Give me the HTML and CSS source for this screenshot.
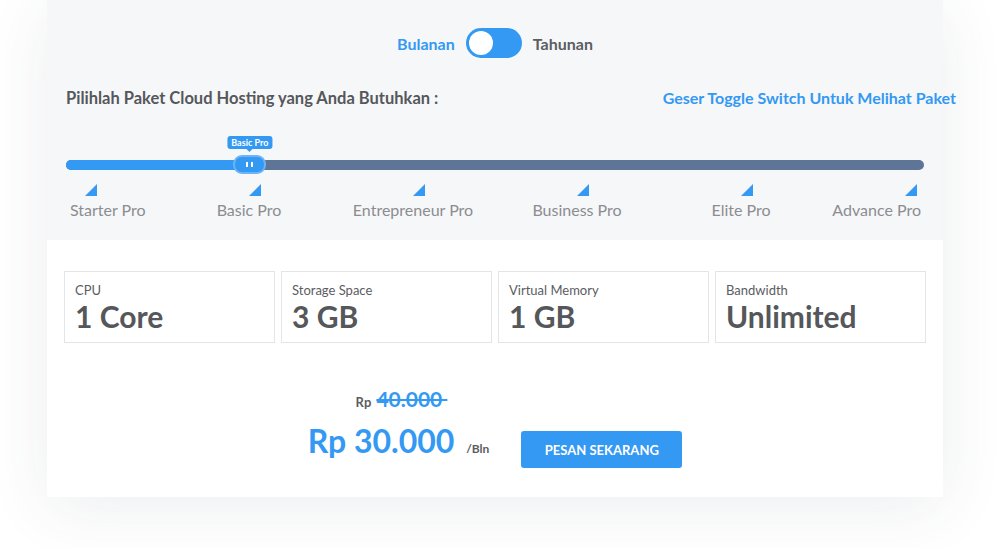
FILE: index.html
```html
<!DOCTYPE html>
<html lang="id">
<head>
    <meta charset="UTF-8">
    <meta name="viewport" content="width=device-width, initial-scale=1.0">
    <title>Paket Cloud Hosting</title>
    <link rel="stylesheet" href="styles.css">
</head>
<body>
    <div class="card">
        <div class="card-top">
            <div class="period-toggle">
                <span class="period active">Bulanan</span>
                <span class="switch"><span class="knob"></span></span>
                <span class="period">Tahunan</span>
            </div>

            <div class="headline">
                <h2>Pilihlah Paket Cloud Hosting yang Anda Butuhkan :</h2>
                <span class="hint">Geser Toggle Switch Untuk Melihat Paket</span>
            </div>

            <div class="slider">
                <div class="track">
                    <div class="fill" style="width: 21.5%"></div>
                </div>
                <div class="handle" style="left: 19.5%">
                    <span class="tip">Basic Pro</span>
                    <span class="grip"></span>
                    <span class="grip"></span>
                </div>
            </div>

            <div class="grid ticks">
                <span class="tick first"></span>
                <span class="tick"></span>
                <span class="tick"></span>
                <span class="tick"></span>
                <span class="tick"></span>
                <span class="tick"></span>
            </div>
            <div class="grid labels">
                <span class="first">Starter Pro</span>
                <span>Basic Pro</span>
                <span>Entrepreneur Pro</span>
                <span>Business Pro</span>
                <span>Elite Pro</span>
                <span class="last">Advance Pro</span>
            </div>
        </div>

        <div class="card-bottom">
            <div class="specs">
                <div class="spec">
                    <div class="spec-name">CPU</div>
                    <div class="spec-value">1 Core</div>
                </div>
                <div class="spec">
                    <div class="spec-name">Storage Space</div>
                    <div class="spec-value">3 GB</div>
                </div>
                <div class="spec">
                    <div class="spec-name">Virtual Memory</div>
                    <div class="spec-value">1 GB</div>
                </div>
                <div class="spec">
                    <div class="spec-name">Bandwidth</div>
                    <div class="spec-value">Unlimited</div>
                </div>
            </div>

            <div class="order">
                <div class="price">
                    <div class="old-price"><small>Rp</small> <s>40.000&nbsp;</s></div>
                    <div class="new-price">Rp 30.000 <small>/Bln</small></div>
                </div>
                <button class="order-btn">PESAN SEKARANG</button>
            </div>
        </div>
    </div>
</body>
</html>
```

FILE: styles.css
```css
* {
    margin: 0;
    padding: 0;
    box-sizing: border-box;
    font-family: Lato, "Open Sans", sans-serif;
}

body {
    background-color: #fff;
    height: 548px;
    overflow: hidden;
}

.card {
    width: 896px;
    margin-left: 47px;
    box-shadow: 0 10px 60px rgba(60, 70, 90, 0.09);
}

.card-top {
    background-color: #f6f7f9;
    padding: 28px 19px 0;
    height: 240px;
}

.period-toggle {
    display: flex;
    justify-content: center;
    align-items: center;
    gap: 11px;
}

.period {
    font-size: 16px;
    font-weight: bold;
    color: #5b5d61;
}

.period.active {
    color: #3399f3;
}

.switch {
    display: flex;
    align-items: center;
    width: 56px;
    height: 30px;
    border-radius: 15px;
    background-color: #3399f3;
    padding: 3px;
}

.knob {
    width: 24px;
    height: 24px;
    border-radius: 50%;
    background-color: #fff;
}

.headline {
    display: flex;
    justify-content: space-between;
    align-items: center;
    margin-top: 30px;
    margin-right: -32px;
    line-height: 20px;
}

.headline h2 {
    font-size: 16.5px;
    color: #55575b;
}

.hint {
    font-size: 16px;
    font-weight: bold;
    color: #3399f3;
}

.slider {
    position: relative;
    margin-top: 30px;
    padding-top: 22px;
}

.track {
    height: 10px;
    border-radius: 5px;
    background-color: #5e7597;
    overflow: hidden;
}

.fill {
    height: 100%;
    background-color: #3399f3;
}

.handle {
    position: absolute;
    top: 17px;
    width: 33px;
    height: 19px;
    border-radius: 9px;
    background-color: #3399f3;
    border: 2px solid #6ab4f7;
    display: flex;
    justify-content: center;
    align-items: center;
    gap: 3px;
}

.grip {
    width: 2px;
    height: 5px;
    background-color: #fff;
}

.tip {
    position: absolute;
    bottom: 23px;
    left: 50%;
    transform: translateX(-50%);
    white-space: nowrap;
    background-color: #3399f3;
    color: #fff;
    font-size: 9px;
    font-weight: bold;
    line-height: 13px;
    padding: 0 4px;
    border-radius: 3px;
}

.tip::after {
    content: "";
    position: absolute;
    top: 100%;
    left: 50%;
    margin-left: -3px;
    border: 3px solid transparent;
    border-top-color: #3399f3;
}

.grid {
    display: grid;
    grid-template-columns: 101px repeat(4, 164px) 100px;
}

.ticks {
    margin-top: 14px;
    height: 12px;
}

.tick {
    width: 12px;
    height: 12px;
    margin-left: 82px;
    background-color: #3399f3;
    clip-path: polygon(100% 0, 100% 100%, 0 100%);
}

.tick.first {
    margin-left: 19px;
}

.labels {
    margin-top: 4px;
    font-size: 16px;
    color: #8c8d90;
    line-height: 20px;
}

.labels span {
    text-align: center;
    white-space: nowrap;
}

.labels .first {
    text-align: left;
    padding-left: 4px;
}

.labels .last {
    text-align: right;
    padding-right: 2px;
}

.card-bottom {
    background-color: #fff;
    padding: 31px 17px 20px;
}

.specs {
    display: grid;
    grid-template-columns: repeat(4, 1fr);
    gap: 6px;
}

.spec {
    height: 72px;
    border: 1px solid #e4e5e8;
    padding: 10px 10px;
}

.spec-name {
    font-size: 13px;
    color: #5b5d61;
    line-height: 17px;
}

.spec-value {
    font-size: 30px;
    font-weight: bold;
    color: #55575b;
    line-height: 34px;
}

.order {
    display: flex;
    justify-content: center;
    align-items: flex-end;
    gap: 32px;
    margin-top: 45px;
}

.price {
    display: flex;
    flex-direction: column;
    align-items: center;
}

.old-price {
    font-size: 21px;
    font-weight: bold;
    color: #3399f3;
    line-height: 22px;
    padding-left: 6px;
}

.old-price small {
    font-size: 13px;
    color: #5b5d61;
}

.new-price {
    font-size: 32px;
    font-weight: bold;
    color: #3399f3;
    line-height: 56px;
}

.new-price small {
    font-size: 12px;
    color: #5b5d61;
    margin-left: 4px;
}

.order-btn {
    width: 161px;
    height: 37px;
    margin-bottom: 9px;
    background-color: #3399f3;
    color: #fff;
    border: none;
    border-radius: 3px;
    font-size: 13px;
    font-weight: bold;
    cursor: pointer;
}
```
